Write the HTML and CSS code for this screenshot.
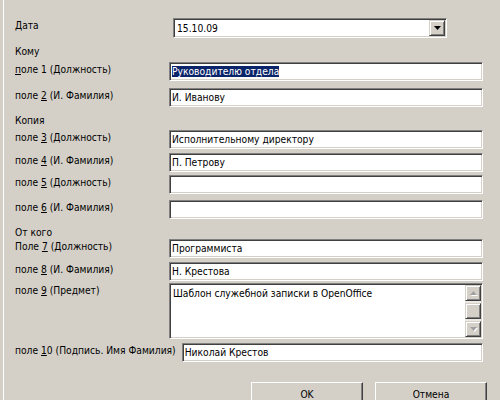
FILE: index.html
```html
<!DOCTYPE html>
<html lang="ru">
<head>
    <meta charset="UTF-8">
    <title>Служебная записка</title>
    <link rel="stylesheet" href="styles.css">
</head>
<body>
    <div class="dialog">
        <div class="form">
            <div class="label">Дата</div>
            <div class="combo">
                <span class="combo-text">15.10.09</span>
                <span class="scroll-btn combo-btn">
                    <svg width="7" height="4" viewBox="0 0 7 4"><polygon points="0,0 7,0 3.5,4" fill="#000"/></svg>
                </span>
            </div>

            <div class="title">Кому</div>
            <div class="label"><u>п</u>оле 1 (Должность)</div>
            <div class="field"><span class="selected">Руководителю отдела</span></div>
            <div class="label">поле <u>2</u> (И. Фамилия)</div>
            <div class="field">И. Иванову</div>

            <div class="title">Копия</div>
            <div class="label">поле <u>3</u> (Должность)</div>
            <div class="field">Исполнительному директору</div>
            <div class="label">поле <u>4</u> (И. Фамилия)</div>
            <div class="field">П. Петрову</div>
            <div class="label">поле <u>5</u> (Должность)</div>
            <div class="field"></div>
            <div class="label">поле <u>6</u> (И. Фамилия)</div>
            <div class="field"></div>

            <div class="title">От кого</div>
            <div class="label">Поле <u>7</u> (Должность)</div>
            <div class="field">Программиста</div>
            <div class="label">поле <u>8</u> (И. Фамилия)</div>
            <div class="field">Н. Крестова</div>
            <div class="label">поле <u>9</u> (Предмет)</div>
            <div class="memo">
                <div class="memo-text">Шаблон служебной записки в OpenOffice</div>
                <div class="scrollbar">
                    <span class="scroll-btn">
                        <svg width="7" height="4" viewBox="0 0 7 4"><polygon points="0,4 7,4 3.5,0" fill="#a0a0a0"/></svg>
                    </span>
                    <span class="scroll-thumb"></span>
                    <span class="scroll-btn">
                        <svg width="7" height="4" viewBox="0 0 7 4"><polygon points="0,0 7,0 3.5,4" fill="#a0a0a0"/></svg>
                    </span>
                </div>
            </div>

            <div class="sign-row">
                <div class="label">поле <u>1</u>0 (Подпись. Имя Фамилия)</div>
                <div class="field">Николай Крестов</div>
            </div>
        </div>

        <div class="buttons">
            <button class="btn">OK</button>
            <button class="btn">Отмена</button>
        </div>
    </div>
</body>
</html>
```

FILE: styles.css
```css
body {
    margin: 0;
    background-color: #d4d0c8;
    font-family: "DejaVu Sans Condensed", "DejaVu Sans", sans-serif;
    font-size: 10.2px;
    color: #000;
}
.dialog {
    margin-left: 3px;
    height: 400px;
    border-left: 1px solid #fff;
    overflow: hidden;
}
.form {
    display: grid;
    grid-template-columns: 154px 314px;
    grid-template-rows: 26px 18px 26px 25px 17px 23px 22px 25px 25px 14px 23px 21px 60px 39px;
    padding: 18px 0 0 11px;
}
.label {
    align-self: start;
    line-height: 16px;
    white-space: nowrap;
}
.title {
    grid-column: 1 / -1;
    align-self: start;
    margin-top: 1px;
    line-height: 13px;
}
.field, .combo, .memo {
    box-sizing: border-box;
    background-color: #fff;
    border: 1px solid;
    border-color: #808080 #fff #fff #808080;
    box-shadow: inset 1px 1px 0 #404040, inset -1px -1px 0 #d4d0c8;
}
.field {
    height: 19px;
    padding: 2px 0 0 2px;
    line-height: 13px;
    white-space: nowrap;
    overflow: hidden;
}
.selected {
    background-color: #0a246a;
    color: #fff;
}
.combo {
    display: flex;
    width: 274px;
    height: 20px;
    margin-left: 4px;
    padding: 1px;
}
.combo-text {
    flex-grow: 1;
    padding: 2px 0 0 2px;
    line-height: 13px;
}
.scroll-btn {
    display: flex;
    align-items: center;
    justify-content: center;
    box-sizing: border-box;
    width: 16px;
    height: 16px;
    background-color: #d4d0c8;
    border: 1px solid;
    border-color: #d4d0c8 #404040 #404040 #d4d0c8;
    box-shadow: inset 1px 1px 0 #fff, inset -1px -1px 0 #808080;
}
.scroll-btn svg {
    filter: drop-shadow(1px 1px 0 #fff);
}
.combo-btn svg {
    filter: none;
}
.memo {
    display: flex;
    height: 56px;
    padding: 1px;
}
.memo-text {
    flex-grow: 1;
    padding: 2px 0 0 2px;
    line-height: 13px;
}
.scrollbar {
    display: flex;
    flex-direction: column;
    width: 16px;
    background-color: #ece9e4;
}
.scroll-thumb {
    flex-grow: 1;
    margin: 2px 0;
    background-color: #d4d0c8;
    border: 1px solid;
    border-color: #d4d0c8 #404040 #404040 #d4d0c8;
    box-shadow: inset 1px 1px 0 #fff, inset -1px -1px 0 #808080;
}
.sign-row {
    grid-column: 1 / -1;
    display: flex;
    gap: 6px;
}
.sign-row .field {
    flex-grow: 1;
}
.buttons {
    display: flex;
    justify-content: flex-end;
    gap: 12px;
    padding-right: 13px;
}
.btn {
    width: 112px;
    height: 24px;
    padding: 0;
    background-color: #d4d0c8;
    border: 1px solid;
    border-color: #fff #404040 #404040 #fff;
    box-shadow: inset -1px -1px 0 #808080;
    font-family: inherit;
    font-size: 10.2px;
    color: #000;
}
```
